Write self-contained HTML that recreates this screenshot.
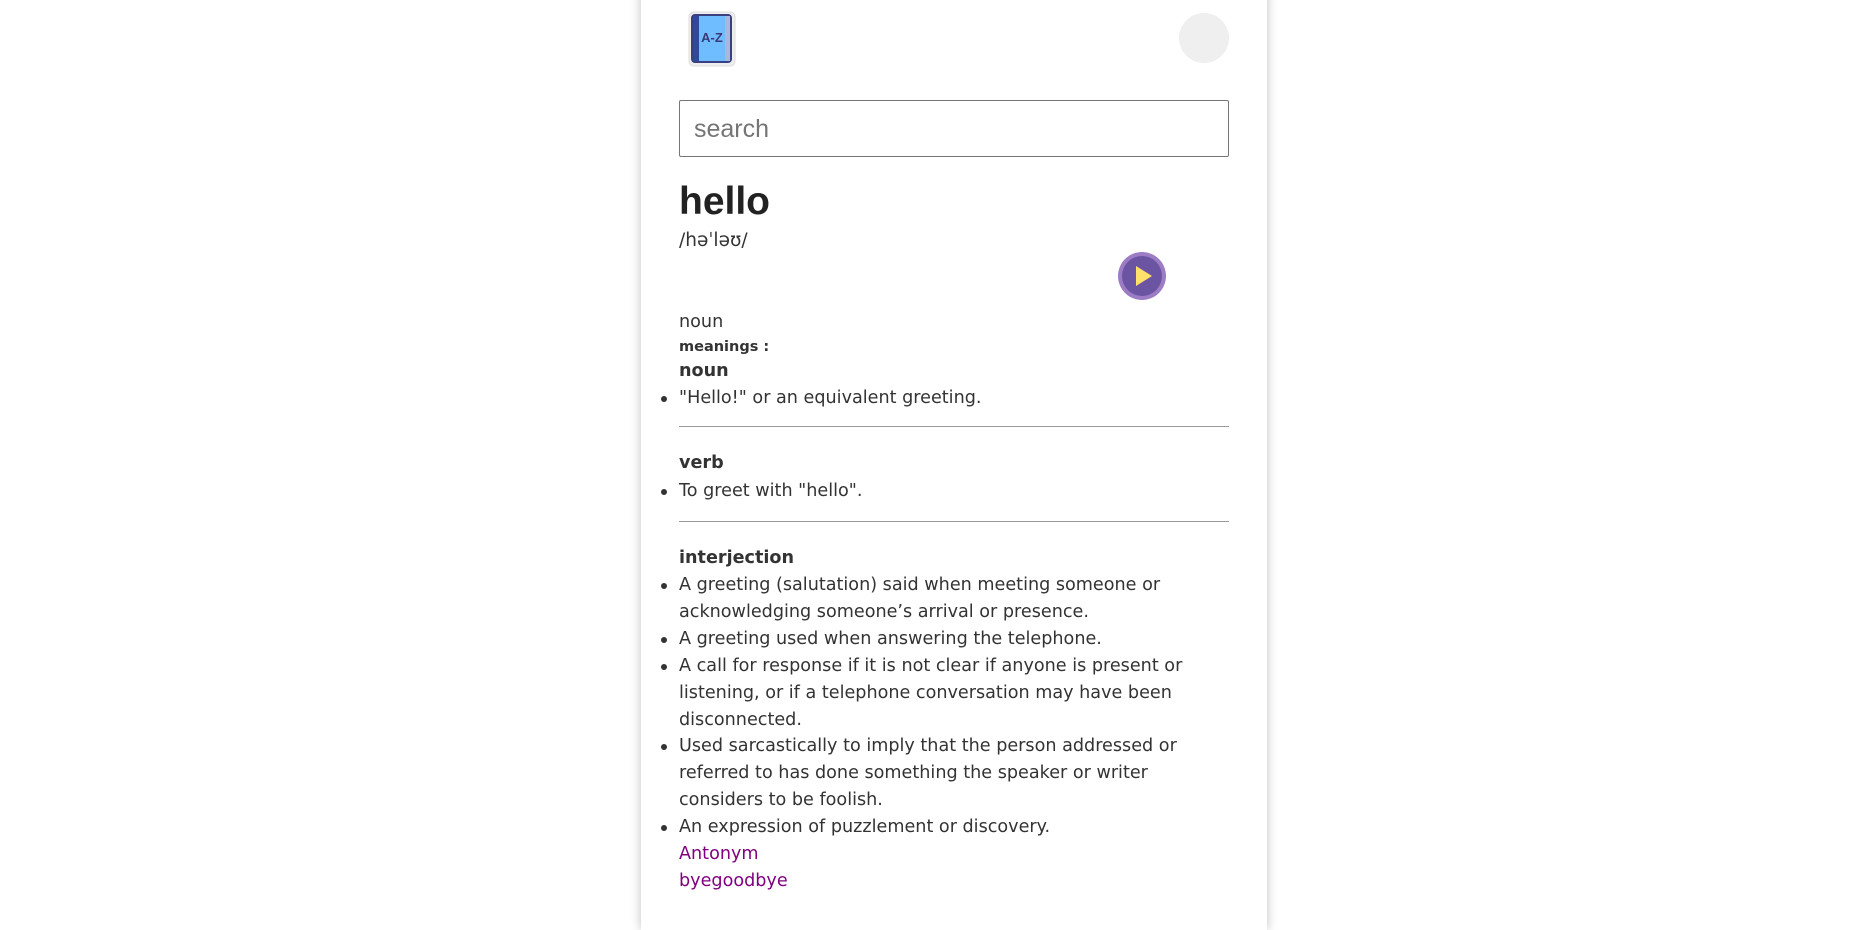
<!DOCTYPE html>
<html><head><meta charset="utf-8"><style>
html,body{margin:0;padding:0;width:1873px;height:902px;overflow:hidden;background:#fff;}
body{font-family:"DejaVu Sans","Liberation Sans",sans-serif;color:#333;}
.card{position:absolute;left:641px;top:-10px;width:626px;height:940px;background:#fff;box-shadow:0 0 10px rgba(0,0,0,0.25);}
.l{position:absolute;left:679px;font-size:17.6px;line-height:27px;white-space:nowrap;}
.b{font-weight:bold;}
.li::before{content:"";position:absolute;left:-18px;top:11px;width:6px;height:6px;border-radius:50%;background:#333;}
.hr{position:absolute;left:679px;width:550px;height:1px;background:#999;}
a{color:#800080;text-decoration:none;}
</style></head><body>
<div class="card"></div>
<svg style="position:absolute;left:688px;top:11px" width="48" height="56" viewBox="0 0 48 56">
<rect x="1" y="1" width="46" height="54" rx="5" fill="#eee" stroke="#ddd"/>
<rect x="4" y="4" width="39" height="47" rx="3" fill="#6fbcff" stroke="#3a3f80" stroke-width="2"/>
<rect x="5" y="5" width="6" height="45" fill="#2d4a9a"/>
<rect x="37" y="5" width="5" height="45" fill="#a9b8d8"/>
<text x="24" y="31" font-family="Liberation Sans" font-weight="bold" font-size="13" fill="#3a3a7a" text-anchor="middle">A-Z</text>
</svg>
<div style="position:absolute;left:1179px;top:13px;width:50px;height:50px;border-radius:50%;background:#efefef"></div>
<div style="position:absolute;left:679px;top:100px;width:548px;height:55px;border:1px solid #767676;border-radius:2px;"></div>
<div style="position:absolute;left:694px;top:115px;font-family:'Liberation Sans',sans-serif;font-size:25px;color:#757575">search</div>
<div style="position:absolute;left:679px;top:174px;font-family:'Liberation Sans',sans-serif;font-weight:bold;font-size:39px;line-height:56px;color:#222">hello</div>
<div class="l" style="top:227px;font-size:18.5px">/həˈləʊ/</div>
<svg style="position:absolute;left:1117px;top:251px" width="50" height="50" viewBox="0 0 50 50">
<circle cx="25" cy="25" r="24" fill="#9c7cc4"/><circle cx="25" cy="25" r="20" fill="#6b55a3"/>
<path d="M19 15 L35 25 L19 35 Z" fill="#ffe06b"/></svg>
<div class="l" style="top:309px">noun</div>
<div class="l b" style="top:334px;font-size:14.5px">meanings :</div>
<div class="l b" style="top:358px">noun</div>
<div class="l li" style="top:385px">"Hello!" or an equivalent greeting.</div>
<div class="hr" style="top:426px"></div>
<div class="l b" style="top:450px">verb</div>
<div class="l li" style="top:478px">To greet with "hello".</div>
<div class="hr" style="top:521px"></div>
<div class="l b" style="top:545px">interjection</div>
<div class="l li" style="top:572px">A greeting (salutation) said when meeting someone or</div>
<div class="l" style="top:599px">acknowledging someone’s arrival or presence.</div>
<div class="l li" style="top:626px">A greeting used when answering the telephone.</div>
<div class="l li" style="top:653px">A call for response if it is not clear if anyone is present or</div>
<div class="l" style="top:680px">listening, or if a telephone conversation may have been</div>
<div class="l" style="top:707px">disconnected.</div>
<div class="l li" style="top:733px">Used sarcastically to imply that the person addressed or</div>
<div class="l" style="top:760px">referred to has done something the speaker or writer</div>
<div class="l" style="top:787px">considers to be foolish.</div>
<div class="l li" style="top:814px">An expression of puzzlement or discovery.</div>
<div class="l" style="top:841px"><a>Antonym</a></div>
<div class="l" style="top:868px"><a>byegoodbye</a></div>
</body></html>
